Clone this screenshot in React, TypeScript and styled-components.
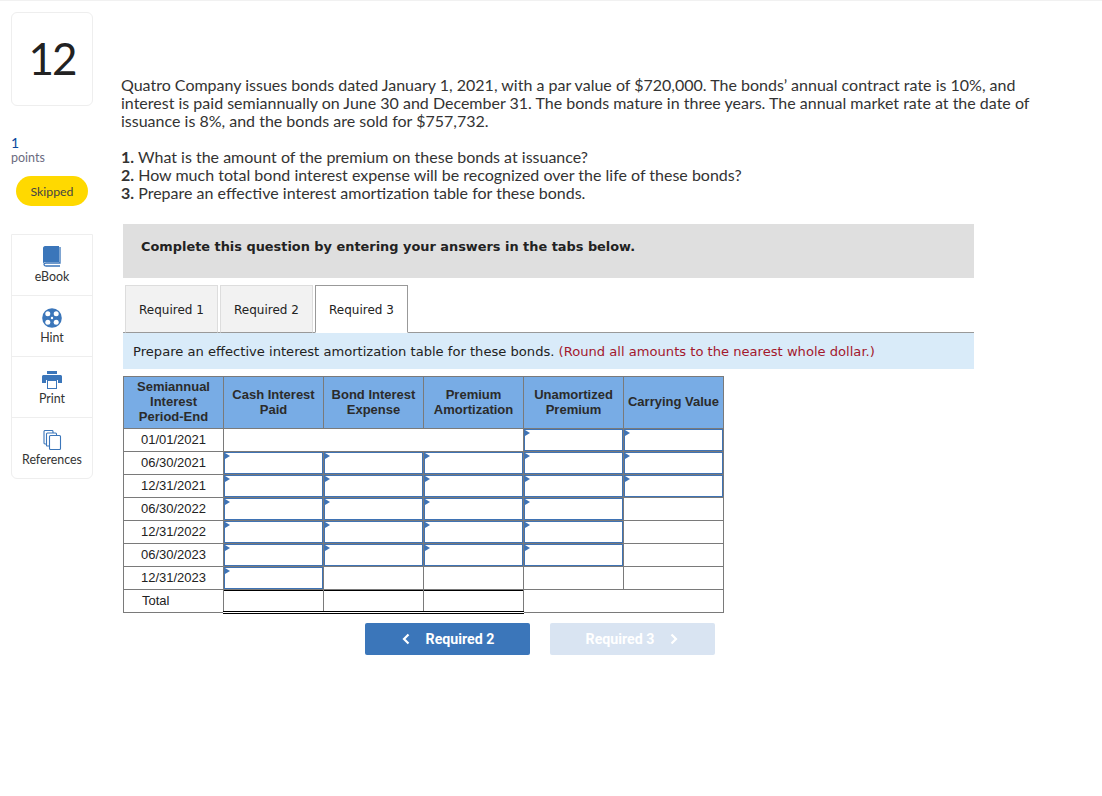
import styled, { createGlobalStyle } from "styled-components";

const GlobalStyle = createGlobalStyle`
  html, body {
    margin: 0;
    padding: 0;
    background: #fff;
  }
  body {
    font-family: "Lato", "Liberation Sans", sans-serif;
    color: #333;
  }
`;

const Page = styled.div`
  display: flex;
  align-items: flex-start;
  width: 1102px;
  height: 796px;
  box-sizing: border-box;
  padding: 11px 0 0 11px;
  border-top: 1px solid #f1f1f1;
  overflow: hidden;
`;

const Sidebar = styled.aside`
  display: flex;
  flex-direction: column;
  width: 82px;
  flex-shrink: 0;
`;

const NumberBox = styled.div`
  display: flex;
  align-items: center;
  justify-content: center;
  height: 94px;
  box-sizing: border-box;
  border: 1px solid #eee;
  border-radius: 6px;
  font-size: 44px;
  letter-spacing: -2px;
  color: #222;
  padding-bottom: 3px;
`;

const PointsValue = styled.div`
  margin-top: 29px;
  font-size: 14px;
  line-height: 16px;
  color: #0b4a9e;
`;

const PointsLabel = styled.div`
  font-size: 12.5px;
  line-height: 14px;
  color: #6b6b80;
`;

const Status = styled.div`
  display: flex;
  align-items: center;
  justify-content: center;
  width: 72px;
  height: 30px;
  margin: 11px 0 0 5px;
  border-radius: 15px;
  background: #ffd900;
  font-size: 12.3px;
  color: #444;
`;

const Tools = styled.div`
  display: flex;
  flex-direction: column;
  margin-top: 28px;
  border: 1px solid #eee;
  border-radius: 0 0 6px 6px;
`;

const Tool = styled.div`
  display: flex;
  flex-direction: column;
  align-items: center;
  justify-content: flex-end;
  height: 60px;
  box-sizing: border-box;
  padding-bottom: 11px;
  gap: 3px;
  font-size: 12.4px;
  line-height: 14px;
  color: #333;
  & + & {
    border-top: 1px solid #eee;
    height: 61px;
  }
`;

const Main = styled.main`
  display: flex;
  flex-direction: column;
  width: 912px;
  margin-left: 28px;
  padding-top: 64px;
`;

const Intro = styled.p`
  margin: 0;
  width: 912px;
  font-size: 16px;
  line-height: 18px;
  color: #333;
`;

const Questions = styled.ol`
  list-style: none;
  margin: 18px 0 0;
  padding: 0;
  font-size: 16px;
  line-height: 18px;
  color: #333;
  b {
    font-weight: 700;
  }
`;

const Content = styled.section`
  display: flex;
  flex-direction: column;
  width: 851px;
  margin: 22px 0 0 2px;
`;

const Banner = styled.div`
  height: 54px;
  box-sizing: border-box;
  padding: 14px 18px;
  background: #dfdfdf;
  font-family: "DejaVu Sans", sans-serif;
  font-size: 12.9px;
  font-weight: 700;
  line-height: 17px;
  color: #222;
`;

const TabBar = styled.div`
  display: flex;
  gap: 2px;
  margin-top: 7px;
  padding-left: 2px;
  border-bottom: 1px solid #999;
`;

const Tab = styled.div<{ $active?: boolean }>`
  display: flex;
  align-items: center;
  justify-content: center;
  width: 93px;
  height: 48px;
  box-sizing: border-box;
  margin-bottom: -1px;
  padding-top: 2px;
  border: 1px solid ${(p) => (p.$active ? "#999" : "#ddd")};
  border-bottom: ${(p) => (p.$active ? "1px solid #fff" : "1px solid #999")};
  background: ${(p) => (p.$active ? "#fff" : "#f2f2f2")};
  font-family: "DejaVu Sans", sans-serif;
  font-size: 12px;
  color: #222;
`;

const Instruction = styled.div`
  height: 36px;
  box-sizing: border-box;
  padding: 11px 10px 9px;
  background: #d9ebf9;
  font-family: "DejaVu Sans", sans-serif;
  font-size: 13.1px;
  line-height: 16px;
  color: #222;
  em {
    font-style: normal;
    color: #a3182d;
  }
`;

const Grid = styled.table`
  width: 601px;
  margin-top: 7px;
  border-collapse: collapse;
  table-layout: fixed;
  font-family: "Liberation Sans", sans-serif;
  font-size: 13px;
  color: #222;
`;

const HeadCell = styled.th`
  width: 100px;
  height: 52px;
  box-sizing: border-box;
  padding: 0 0 2px;
  border: 1px solid #7a7a7a;
  background: #78ace5;
  font-size: 13px;
  font-weight: 700;
  line-height: 15px;
  white-space: pre-line;
  color: #2b2b2b;
`;

const Row = styled.tr`
  height: 23px;
`;

const DateCell = styled.td`
  box-sizing: border-box;
  padding: 0;
  border: 1px solid #7a7a7a;
  text-align: center;
  line-height: 14px;
`;

const TotalLabel = styled(DateCell)`
  padding-left: 18px;
  text-align: left;
`;

const Cell = styled.td<{ $open?: boolean; $total?: boolean }>`
  position: relative;
  box-sizing: border-box;
  padding: 0;
  border: 1px solid #7a7a7a;
  ${(p) =>
    p.$total &&
    `
    border-bottom: 3px double #000;
    box-shadow: inset 0 1px 0 #000;
  `}
  ${(p) =>
    p.$open &&
    `
    box-shadow: inset 0 0 0 1px #3f73b4;
    &::before {
      content: "";
      position: absolute;
      top: 1px;
      left: 1px;
      border-top: 3px solid transparent;
      border-bottom: 3px solid transparent;
      border-left: 5px solid #3f73b4;
    }
  `}
`;

const Pager = styled.div`
  display: flex;
  gap: 20px;
  margin: 9px 0 0 242px;
`;

const PagerButton = styled.div<{ $disabled?: boolean }>`
  display: flex;
  align-items: center;
  justify-content: center;
  gap: 15px;
  width: 165px;
  height: 32px;
  border-radius: 2px;
  background: ${(p) => (p.$disabled ? "#d9e4f2" : "#3b76ba")};
  font-family: "Roboto", sans-serif;
  font-size: 14.2px;
  font-weight: 700;
  color: #fff;
  svg {
    width: 10px;
    height: 12px;
    stroke: #fff;
    stroke-width: 2.2;
    fill: none;
  }
`;

const BookIcon = () => (
  <svg width="20" height="21" viewBox="0 0 20 21">
    <path d="M3 0h14v16H3.500C2 16 1 17 1 18V2c0-1 1-2 2-2z" fill="#3b76ba" />
    <path d="M18 1v16H4c-1 0-2 .5-2 1.500S3 20 4 20h14" fill="none" stroke="#3b76ba" strokeWidth="1.300" />
  </svg>
);

const HintIcon = () => (
  <svg width="20" height="20" viewBox="0 0 20 20">
    <circle cx="10" cy="10" r="9.800" fill="#3b76ba" />
    <circle cx="5.800" cy="5.800" r="2.500" fill="#fff" />
    <circle cx="14.200" cy="5.800" r="2.500" fill="#fff" />
    <circle cx="5.800" cy="14.200" r="2.500" fill="#fff" />
    <circle cx="14.200" cy="14.200" r="2.500" fill="#fff" />
    <circle cx="10" cy="10" r="1.200" fill="#fff" />
  </svg>
);

const PrintIcon = () => (
  <svg width="20" height="18" viewBox="0 0 20 18">
    <rect x="5" y="0" width="10" height="3" fill="#3b76ba" />
    <path d="M1.500 4h17c.8 0 1.500.7 1.500 1.500V12h-4V9H4v3H0V5.500C0 4.700.7 4 1.500 4z" fill="#3b76ba" />
    <rect x="5.500" y="9.500" width="9" height="8" fill="#fff" stroke="#3b76ba" />
  </svg>
);

const ReferencesIcon = () => (
  <svg width="19" height="20" viewBox="0 0 19 20" fill="#fff" stroke="#3b76ba" strokeWidth="1.100">
    <path d="M1 1.500a1 1 0 0 1 1-1h7a1 1 0 0 1 1 1V14H2a1 1 0 0 1-1-1z" />
    <path d="M3.500 4a1 1 0 0 1 1-1h8a1 1 0 0 1 1 1v12h-9.500a.5.5 0 0 1-.5-.5z" />
    <rect x="6.500" y="5.500" width="11" height="14" rx="1" />
  </svg>
);

const tools = [
  { label: "eBook", icon: <BookIcon /> },
  { label: "Hint", icon: <HintIcon /> },
  { label: "Print", icon: <PrintIcon /> },
  { label: "References", icon: <ReferencesIcon /> },
];

const headers = [
  "Semiannual\nInterest\nPeriod-End",
  "Cash Interest\nPaid",
  "Bond Interest\nExpense",
  "Premium\nAmortization",
  "Unamortized\nPremium",
  "Carrying Value",
];

// which of the five number columns take an entry, per row
const rows = [
  { date: "06/30/2021", open: [true, true, true, true, true] },
  { date: "12/31/2021", open: [true, true, true, true, true] },
  { date: "06/30/2022", open: [true, true, true, true, false] },
  { date: "12/31/2022", open: [true, true, true, true, false] },
  { date: "06/30/2023", open: [true, true, true, true, false] },
  { date: "12/31/2023", open: [true, false, false, false, false] },
];

function App() {
  return (
    <Page>
      <GlobalStyle />
      <Sidebar>
        <NumberBox>12</NumberBox>
        <PointsValue>1</PointsValue>
        <PointsLabel>points</PointsLabel>
        <Status>Skipped</Status>
        <Tools>
          {tools.map((tool) => (
            <Tool key={tool.label}>
              {tool.icon}
              {tool.label}
            </Tool>
          ))}
        </Tools>
      </Sidebar>
      <Main>
        <Intro>
          Quatro Company issues bonds dated January 1, 2021, with a par value of $720,000. The bonds’ annual contract rate
          is 10%, and interest is paid semiannually on June 30 and December 31. The bonds mature in three years. The annual
          market rate at the date of issuance is 8%, and the bonds are sold for $757,732.
        </Intro>
        <Questions>
          <li>
            <b>1.</b> What is the amount of the premium on these bonds at issuance?
          </li>
          <li>
            <b>2.</b> How much total bond interest expense will be recognized over the life of these bonds?
          </li>
          <li>
            <b>3.</b> Prepare an effective interest amortization table for these bonds.
          </li>
        </Questions>
        <Content>
          <Banner>Complete this question by entering your answers in the tabs below.</Banner>
          <TabBar>
            <Tab>Required 1</Tab>
            <Tab>Required 2</Tab>
            <Tab $active>Required 3</Tab>
          </TabBar>
          <Instruction>
            Prepare an effective interest amortization table for these bonds. <em>(Round all amounts to the nearest whole dollar.)</em>
          </Instruction>
          <Grid>
            <thead>
              <tr>
                {headers.map((h) => (
                  <HeadCell key={h}>{h}</HeadCell>
                ))}
              </tr>
            </thead>
            <tbody>
              <Row>
                <DateCell>01/01/2021</DateCell>
                <Cell colSpan={3} />
                <Cell $open />
                <Cell $open />
              </Row>
              {rows.map((row) => (
                <Row key={row.date}>
                  <DateCell>{row.date}</DateCell>
                  {row.open.map((open, i) => (
                    <Cell key={i} $open={open} />
                  ))}
                </Row>
              ))}
              <Row>
                <TotalLabel>Total</TotalLabel>
                <Cell $total />
                <Cell $total />
                <Cell $total />
                <Cell colSpan={2} />
              </Row>
            </tbody>
          </Grid>
          <Pager>
            <PagerButton>
              <svg viewBox="0 0 10 12">
                <path d="M7.500 1.500 3 6l4.500 4.500" />
              </svg>
              Required 2
            </PagerButton>
            <PagerButton $disabled>
              Required 3
              <svg viewBox="0 0 10 12">
                <path d="M2.500 1.500 7 6l-4.500 4.500" />
              </svg>
            </PagerButton>
          </Pager>
        </Content>
      </Main>
    </Page>
  );
}

export default App;
